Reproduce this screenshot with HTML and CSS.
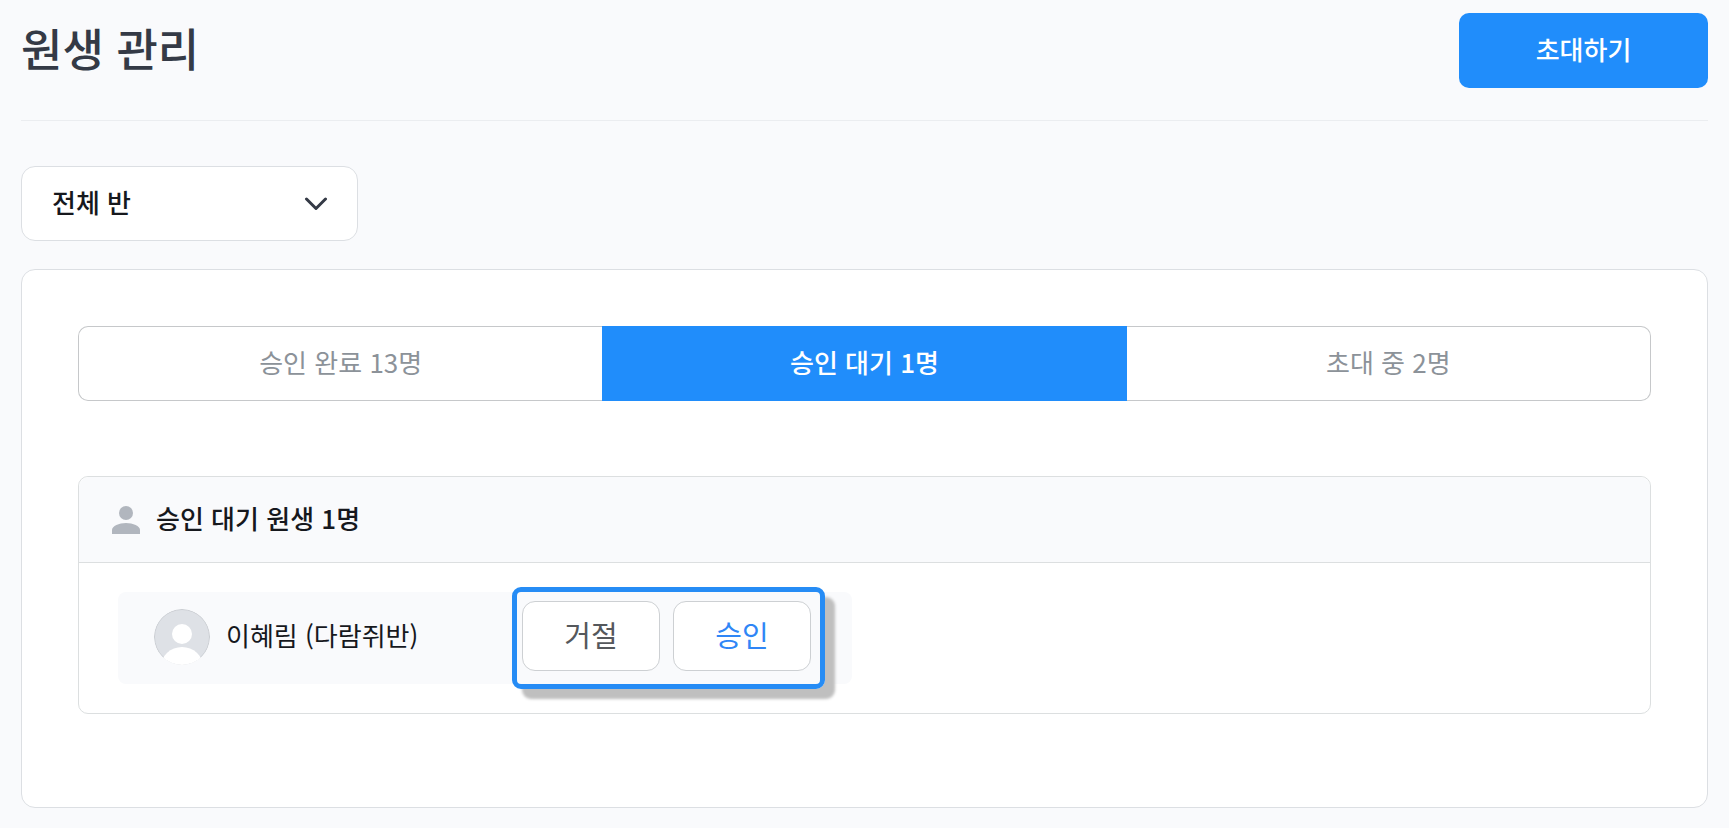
FILE: index.html
```
<!DOCTYPE html>
<html lang="ko">
<head>
  <meta charset="UTF-8" />
  <meta name="viewport" content="width=device-width, initial-scale=1.0"/>
  <title>원생 관리</title>
  <link rel="stylesheet" href="styles.css">
</head>
<body>

  <header class="page-header">
    <h1>원생 관리</h1>
    <button class="btn-invite" type="button">초대하기</button>
  </header>

  <main>
    <div class="class-filter">
      <select class="class-select" aria-label="반 선택">
        <option>전체 반</option>
        <option>다람쥐반</option>
      </select>
      <svg class="chevron" viewBox="0 0 24 14" fill="none" stroke="#343a46" stroke-width="3" stroke-linecap="round" stroke-linejoin="round" aria-hidden="true">
        <path d="M2.5 2 12 11.5 21.5 2"/>
      </svg>
    </div>

    <section class="card">
      <div class="tabs">
        <button class="tab" type="button">승인 완료 13명</button>
        <button class="tab active" type="button">승인 대기 1명</button>
        <button class="tab" type="button">초대 중 2명</button>
      </div>

      <div class="panel">
        <div class="panel-header">
          <svg class="person-icon" viewBox="0 0 28 28" fill="#b1b6be" aria-hidden="true">
            <circle cx="14" cy="7" r="7"/>
            <path d="M0 28v-4c0-4 7-7 14-7s14 3 14 7v4z"/>
          </svg>
          <h2>승인 대기 원생 1명</h2>
        </div>

        <div class="panel-body">
          <div class="student">
            <svg class="avatar" viewBox="0 0 56 56" aria-hidden="true">
              <defs>
                <clipPath id="avatar-clip"><circle cx="28" cy="28" r="28"/></clipPath>
              </defs>
              <g clip-path="url(#avatar-clip)">
                <circle cx="28" cy="28" r="27.5" fill="#dee1e6" stroke="#c9ccd1"/>
                <circle cx="28" cy="25" r="10" fill="#fff"/>
                <ellipse cx="28" cy="58" rx="21" ry="20" fill="#fff"/>
              </g>
            </svg>
            <span class="student-name">이혜림 (다람쥐반)</span>
            <div class="actions">
              <button class="btn-action" type="button">거절</button>
              <button class="btn-action approve" type="button">승인</button>
            </div>
          </div>
        </div>
      </div>
    </section>
  </main>

</body>
</html>
```

FILE: styles.css
```
* {
  margin: 0;
  padding: 0;
  box-sizing: border-box;
}

body {
  padding: 13px 21px 19px;
  font-family: "Noto Sans CJK KR", sans-serif;
  font-size: 26px;
  line-height: 38px;
  color: #16181d;
  background: #f9fafc;
}

button, select {
  padding-bottom: 4px;
  font-family: inherit;
  font-size: inherit;
  line-height: inherit;
  cursor: pointer;
}

.page-header {
  display: flex;
  justify-content: space-between;
  align-items: flex-start;
  padding-bottom: 32px;
  border-bottom: 1px solid #ebedf0;
}

h1 {
  font-size: 45px;
  font-weight: 500;
  line-height: 70px;
  color: #343a46;
}

.btn-invite {
  width: 249px;
  height: 75px;
  font-weight: 500;
  color: #fff;
  background: #208dfb;
  border: none;
  border-radius: 10px;
}

/* class drop-down */
.class-filter {
  position: relative;
  width: 337px;
  margin: 45px 0 28px;
}

.class-select {
  display: block;
  width: 100%;
  height: 75px;
  padding: 0 30px 4px;
  font-weight: 500;
  color: #16181d;
  background: #fff;
  border: 1px solid #dcdfe3;
  border-radius: 14px;
  appearance: none;
}

.chevron {
  position: absolute;
  top: 31px;
  right: 30px;
  width: 24px;
  height: 14px;
  pointer-events: none;
}

.card {
  padding: 56px 56px 93px;
  background: #fff;
  border: 1px solid #dcdfe3;
  border-radius: 14px;
}

.tabs {
  display: grid;
  grid-template-columns: repeat(3, 1fr);
  margin-bottom: 75px;
}

.tab {
  height: 75px;
  color: #8c9299;
  background: #fff;
  border: 1px solid #c6c8ca;
}

.tab:first-child {
  border-right: none;
  border-radius: 10px 0 0 10px;
}

.tab:last-child {
  border-left: none;
  border-radius: 0 10px 10px 0;
}

.tab.active {
  font-weight: 500;
  color: #fff;
  background: #208dfb;
  border-color: #208dfb;
}

.panel {
  border: 1px solid #dcdfe0;
  border-radius: 10px;
}

.panel-header {
  display: flex;
  align-items: center;
  gap: 16px;
  height: 86px;
  padding: 0 33px;
  background: #f9fafc;
  border-bottom: 1px solid #dcdfe0;
  border-radius: 10px 10px 0 0;
}

.person-icon {
  width: 28px;
  height: 28px;
}

h2, .student-name {
  padding-bottom: 4px;
}

h2 {
  font-size: 26px;
  font-weight: 500;
}

.panel-body {
  padding: 29px 39px;
}

.student {
  display: flex;
  align-items: center;
  gap: 16px;
  width: 734px;
  max-width: 100%;
  height: 92px;
  padding: 0 41px 2px 36px;
  background: #f9fafc;
  border-radius: 8px;
}

.avatar {
  width: 56px;
  height: 56px;
}

.actions {
  position: relative;
  display: flex;
  gap: 13px;
  margin-left: auto;
  margin-bottom: 2px;
}

/* highlight frame round the two buttons */
.actions::after {
  content: "";
  position: absolute;
  inset: -14px -14px -18px -10px;
  border: 5px solid #268cf5;
  border-radius: 9px;
  box-shadow: 10px 10px 3px #bfbfbf;
  pointer-events: none;
}

.btn-action {
  width: 138px;
  height: 70px;
  font-size: 29px;
  color: #55585c;
  background: #fff;
  border: 1px solid #cdd0d3;
  border-radius: 13px;
}

.btn-action.approve {
  color: #2f86f6;
}
```
